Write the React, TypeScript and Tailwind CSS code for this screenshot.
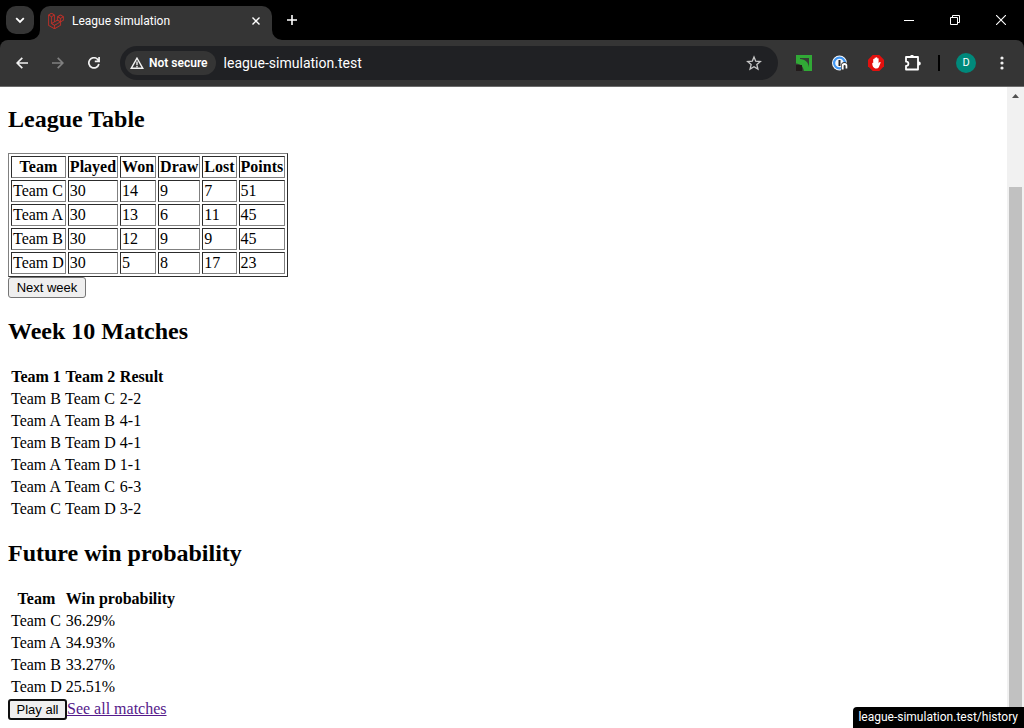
import { FaLaravel } from "react-icons/fa";

const league = [
  ["Team C", 30, 14, 9, 7, 51],
  ["Team A", 30, 13, 6, 11, 45],
  ["Team B", 30, 12, 9, 9, 45],
  ["Team D", 30, 5, 8, 17, 23],
];

const matches = [
  ["Team B", "Team C", "2-2"],
  ["Team A", "Team B", "4-1"],
  ["Team B", "Team D", "4-1"],
  ["Team A", "Team D", "1-1"],
  ["Team A", "Team C", "6-3"],
  ["Team C", "Team D", "3-2"],
];

const odds = [
  ["Team C", "36.29%"],
  ["Team A", "34.93%"],
  ["Team B", "33.27%"],
  ["Team D", "25.51%"],
];

const insetCell = "h-[22px] border border-t-[#2c2c2c] border-l-[#2c2c2c] border-r-[#808080] border-b-[#808080] px-px py-0";

function TabStrip() {
  return (
    <div className="flex h-10 shrink-0 items-end bg-black pl-1.5">
      <button aria-label="Search tabs" className="mb-1.5 flex size-7 items-center justify-center rounded-[10px] bg-[#353535]">
        <svg width="10" height="7" viewBox="0 0 10 7" fill="none" stroke="#fff" strokeWidth="1.800">
          <path d="M1.200 1.200 5 5 8.800 1.200" />
        </svg>
      </button>
      <div className="relative ml-1.5 flex h-[34px] w-[232px] items-center rounded-t-[10px] bg-[#353535] pr-2.5 pb-1 pl-2">
        <svg className="absolute bottom-0 -left-2.5" width="10" height="10" viewBox="0 0 10 10">
          <path d="M10 0v10H0A10 10 0 0 0 10 0Z" fill="#353535" />
        </svg>
        <svg className="absolute -right-2.5 bottom-0" width="10" height="10" viewBox="0 0 10 10">
          <path d="M0 0v10h10A10 10 0 0 1 0 0Z" fill="#353535" />
        </svg>
        <FaLaravel size={16} color="#e0322a" stroke="#e0322a" strokeWidth={8} />
        <span className="ml-2 flex-1 text-xs text-white">League simulation</span>
        <button aria-label="Close tab" className="flex size-3 items-center justify-center">
          <svg width="8" height="8" viewBox="0 0 8 8" stroke="#fff" strokeWidth="1.400">
            <path d="m.5.5 7 7M7.500.5l-7 7" />
          </svg>
        </button>
      </div>
      <button aria-label="New tab" className="mb-2 ml-2 flex size-6 items-center justify-center">
        <svg width="10" height="10" viewBox="0 0 10 10" stroke="#fff" strokeWidth="1.600">
          <path d="M5 0v10M0 5h10" />
        </svg>
      </button>
      <div className="flex-1" />
      <div className="flex h-10 items-center text-white">
        <button aria-label="Minimize" className="flex h-10 w-[46px] items-center justify-center">
          <svg width="10" height="10" viewBox="0 0 10 10" stroke="#fff"><path d="M0 5.500h10" /></svg>
        </button>
        <button aria-label="Restore" className="flex h-10 w-[46px] items-center justify-center">
          <svg width="10" height="10" viewBox="0 0 10 10" fill="none" stroke="#fff">
            <path d="M.5 2.500h7v7h-7zM2.500 2.500v-2h7v7h-2" />
          </svg>
        </button>
        <button aria-label="Close" className="flex h-10 w-[46px] items-center justify-center">
          <svg width="10" height="10" viewBox="0 0 10 10" stroke="#fff" strokeWidth="1.100"><path d="m0 0 10 10M10 0 0 10" /></svg>
        </button>
      </div>
    </div>
  );
}

function Toolbar() {
  return (
    <div className="shrink-0 bg-black">
      <div className="flex h-[47px] items-center rounded-t-lg border-b border-[#6b6b6b] bg-[#353535] pr-3.5 pl-3.5">
        <div className="flex gap-5">
          <button aria-label="Back" className="flex size-4 items-center justify-center">
            <svg width="12" height="12" viewBox="0 0 12 12" fill="none" stroke="#f1f1f1" strokeWidth="1.700"><path d="M12 6H1.500M6.300.8 1.100 6l5.200 5.200" /></svg>
          </button>
          <button aria-label="Forward" className="flex size-4 items-center justify-center">
            <svg width="12" height="12" viewBox="0 0 12 12" fill="none" stroke="#808080" strokeWidth="1.700"><path d="M0 6h10.500M5.700.8 10.900 6l-5.200 5.200" /></svg>
          </button>
          <button aria-label="Reload" className="flex size-4 items-center justify-center">
            <svg width="12" height="12" viewBox="0 0 12 12" fill="none" stroke="#f1f1f1" strokeWidth="1.700"><path d="M10.900 7A5.100 5.100 0 1 1 9.800 2.500L11 3.800M11.100 0v4.300H6.800" /></svg>
          </button>
        </div>
        <div className="ml-[18px] flex h-[34px] flex-1 items-center rounded-full bg-[#202124] pr-4 pl-[5px]">
          <button className="flex h-6 items-center gap-[5px] rounded-full bg-[#353535] pr-2 pl-[5px] text-xs font-semibold text-white">
            <svg width="14" height="12" viewBox="0 0 14 12" fill="none" stroke="#f1f1f1" strokeWidth="1.400">
              <path d="M7 1.200 1.200 11.300h11.600zM7 4.500v3.500M7 8.800v1.400" />
            </svg>
            Not secure
          </button>
          <input aria-label="Address" readOnly value="league-simulation.test" className="ml-2 min-w-0 flex-1 bg-transparent text-sm text-white outline-none" />
          <button aria-label="Bookmark">
            <svg width="16" height="16" viewBox="0 0 24 24" fill="none" stroke="#c7c7c7" strokeWidth="2">
              <path d="m12 3 2.600 6.200 6.900.6-5.200 4.500 1.600 6.700-5.900-3.500L6.100 21l1.600-6.700-5.200-4.500 6.900-.6z" />
            </svg>
          </button>
        </div>
        <div className="ml-[18px] flex items-center gap-5">
          <button aria-label="Green extension">
            <svg width="16" height="16" viewBox="0 0 16 16">
              <path d="M0 0h16v16H0z" fill="#31a936" />
              <path d="M4 3h9v9.500C12.300 7 9.500 4.500 4 4Z" fill="#353d35" />
              <path d="M0 8.500C4.500 8.800 7.300 11.500 7.800 16H0z" fill="#353535" />
              <path d="M0 10h6v6H0z" fill="#221b1b" />
            </svg>
          </button>
          <button aria-label="Password manager">
            <svg width="16" height="16" viewBox="0 0 16 16">
              <circle cx="7.500" cy="8" r="7.500" fill="#f5f7fa" />
              <circle cx="7.500" cy="8" r="5.400" fill="#f5f7fa" stroke="#3f96f2" strokeWidth="2.200" />
              <path d="M6.500 5h2v6h-2z" fill="#222" />
              <path d="M9 16v-5.500a3.500 3.500 0 0 1 7 0V13h-3v3z" fill="#353535" />
              <path d="M9.700 14.500v-3.700a2.800 2.800 0 0 1 5.600 0V13.500h-1.700v-2.400a1 1 0 0 0-2 0v3.400z" fill="#fff" />
            </svg>
          </button>
          <button aria-label="Ad blocker">
            <svg width="16" height="16" viewBox="0 0 16 16">
              <path d="M4.700 0h6.600L16 4.700v6.600L11.300 16H4.700L0 11.300V4.700z" fill="#e3100e" />
              <path d="M5.200 8V4.300q.7-.9 1.300 0V7V3q.7-.9 1.400 0v3.700V2.600q.8-.9 1.400 0V7V3.600q.8-.9 1.300 0v5l.7-1.300q1-.7 1.400.2l-1.900 4.800Q10 13.600 8.500 13.600H7.300Q4.400 12.500 4.200 8.500q.3-1 1-.5Z" fill="#fff" />
            </svg>
          </button>
          <button aria-label="Extensions">
            <svg width="18" height="16" viewBox="0 0 18 16" fill="none">
              <path d="M2 2h12v12.500H2v-3.700h.3a2 2 0 0 0 0-4.200H2z" stroke="#fff" strokeWidth="1.800" strokeLinejoin="round" />
              <path d="M6.300 2v-.6a1.700 1.700 0 0 1 3.400 0V2zM14 6.600h.9a1.900 1.900 0 0 1 0 3.800H14z" fill="#fff" />
            </svg>
          </button>
        </div>
        <div className="ml-4 h-4 w-0.5 bg-black" />
        <button aria-label="Profile" className="ml-4 flex size-5 items-center justify-center rounded-full bg-[#00897b] text-[11px] text-white">D</button>
        <button aria-label="Menu" className="ml-[18px] flex size-4 items-center justify-center">
          <svg width="4" height="14" viewBox="0 0 4 14" fill="#f1f1f1"><circle cx="2" cy="2" r="1.600" /><circle cx="2" cy="7" r="1.600" /><circle cx="2" cy="12" r="1.600" /></svg>
        </button>
      </div>
    </div>
  );
}

function PlainTable({ head, rows }: { head: string[]; rows: string[][] }) {
  return (
    <table className="border-separate border-spacing-0.5">
      <thead>
        <tr>{head.map((h) => <th key={h} className="h-5 px-px py-0 text-center font-bold">{h}</th>)}</tr>
      </thead>
      <tbody>
        {rows.map((row) => (
          <tr key={row.join()}>{row.map((v, i) => <td key={i} className="h-5 px-px py-0">{v}</td>)}</tr>
        ))}
      </tbody>
    </table>
  );
}

export default function App() {
  return (
    <div className="relative flex h-screen flex-col overflow-hidden bg-white font-['Roboto',sans-serif]">
      <TabStrip />
      <Toolbar />
      <div className="flex min-h-0 flex-1">
        <main className="flex-1 overflow-hidden px-2 pt-[19px] font-['Liberation_Serif',serif] text-base leading-[18px] text-black">
          <h2 className="mb-5 text-2xl leading-[27px] font-bold">League Table</h2>
          <table className="border-separate border-spacing-0.5 border border-t-[#808080] border-r-[#2c2c2c] border-b-[#2c2c2c] border-l-[#808080]">
            <thead>
              <tr>
                {["Team", "Played", "Won", "Draw", "Lost", "Points"].map((h) => (
                  <th key={h} className={`${insetCell} text-center font-bold`}>{h}</th>
                ))}
              </tr>
            </thead>
            <tbody>
              {league.map((row) => (
                <tr key={row[0]}>{row.map((v, i) => <td key={i} className={insetCell}>{v}</td>)}</tr>
              ))}
            </tbody>
          </table>
          <button className="block h-[21px] w-[78px] rounded-[3px] border border-[#767676] bg-[#efefef] font-['Liberation_Sans',sans-serif] text-[13px] leading-4">Next week</button>
          <h2 className="my-5 text-2xl leading-[27px] font-bold">Week 10 Matches</h2>
          <PlainTable head={["Team 1", "Team 2", "Result"]} rows={matches} />
          <h2 className="mt-[19px] mb-5 text-2xl leading-[27px] font-bold">Future win probability</h2>
          <PlainTable head={["Team", "Win probability"]} rows={odds} />
          <div className="flex items-start">
            <button className="h-[21px] w-[59px] rounded-[3px] border-2 border-[#101010] bg-[#efefef] font-['Liberation_Sans',sans-serif] text-[13px] leading-4">Play all</button>
            <a href="#history" className="leading-5 text-[#551a8b] underline">See all matches</a>
          </div>
        </main>
        <div className="flex w-[17px] flex-col items-center bg-[#f1f1f1]">
          <svg className="mt-[7px] shrink-0" width="7" height="4" viewBox="0 0 7 4" fill="#505050"><path d="M3.500 0 7 4H0z" /></svg>
          <div className="mt-[89px] w-[13px] flex-1 bg-[#c1c1c1]" />
        </div>
      </div>
      <div className="absolute right-0 bottom-0 h-[21px] rounded-tl bg-black pr-1.5 pl-[5px] text-xs leading-[21px] text-white">league-simulation.test/history</div>
    </div>
  );
}
